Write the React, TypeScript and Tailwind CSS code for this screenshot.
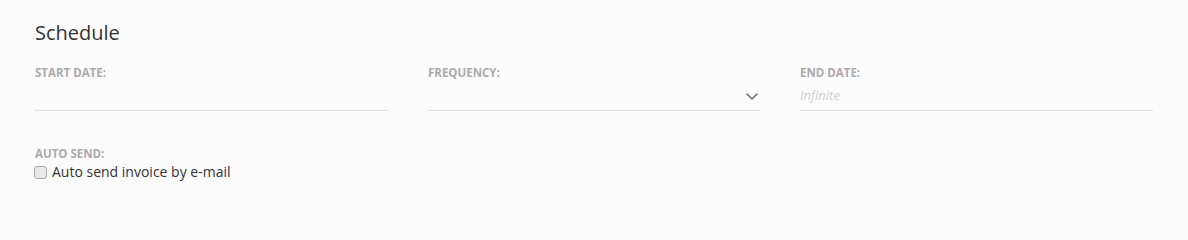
import { useState } from "react"

function Chevron() {
  return (
    <svg width="12" height="7" viewBox="0 0 12 7" fill="none" className="shrink-0">
      <path d="M1 1L6 6L11 1" stroke="#555" strokeWidth="1.2" strokeLinecap="round" strokeLinejoin="round" />
    </svg>
  )
}

function FieldLabel({ children }: { children: React.ReactNode }) {
  return <div className="text-[11.5px] leading-[16px] font-bold uppercase text-[#aaa]">{children}</div>
}

export default function App() {
  const [autoSend, setAutoSend] = useState(false)

  return (
    <div className="min-h-[240px] bg-[#fcfcfc] pl-[35px] pt-[19px] font-['Open_Sans',sans-serif] text-[#333]">
      <h2 className="text-[20px] leading-[28px] font-normal">Schedule</h2>

      <div className="mt-[18px] grid grid-cols-[353px_332px_353px] gap-x-10">
        <div className="flex flex-col">
          <FieldLabel>Start date:</FieldLabel>
          <input
            type="text"
            className="h-[30px] border-b border-[#e0e0e0] bg-transparent text-[13px] outline-none"
          />
        </div>

        <div className="flex flex-col">
          <FieldLabel>Frequency:</FieldLabel>
          <div className="flex h-[30px] items-center justify-end border-b border-[#e0e0e0] pr-[2px] pt-[1px]">
            <Chevron />
          </div>
        </div>

        <div className="flex flex-col">
          <FieldLabel>End date:</FieldLabel>
          <input
            type="text"
            placeholder="Infinite"
            className="h-[30px] border-b border-[#e0e0e0] bg-transparent pb-[1px] text-[13px] outline-none placeholder:italic placeholder:text-[#cfcfcf]"
          />
        </div>
      </div>

      <div className="mt-[35px]">
        <FieldLabel>Auto send:</FieldLabel>
        <label className="-ml-px flex items-center gap-[5px] text-[14px] leading-[20px] text-[#333]">
          <input
            type="checkbox"
            checked={autoSend}
            onChange={(e) => setAutoSend(e.target.checked)}
            className="m-0 h-[13px] w-[13px] appearance-none rounded-[3px] border border-[#a8a8a8] bg-[#e9e9e9] checked:bg-[#4a90d9]"
          />
          Auto send invoice by e-mail
        </label>
      </div>
    </div>
  )
}
